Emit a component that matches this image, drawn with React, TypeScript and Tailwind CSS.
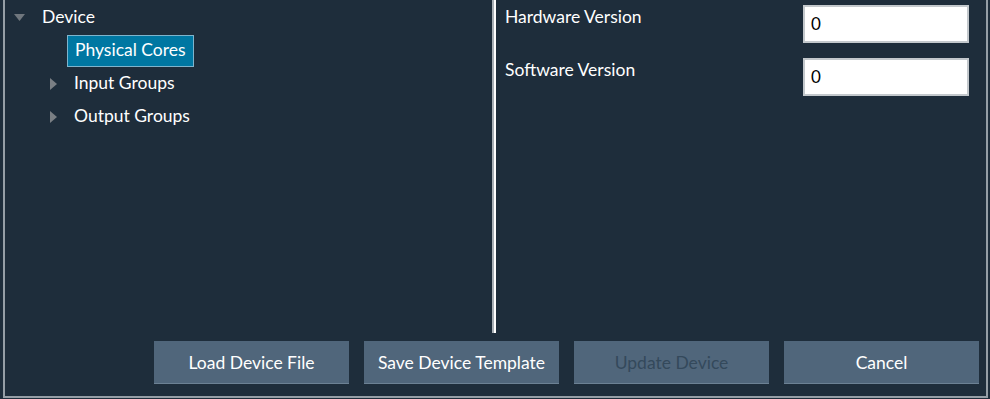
const font = { fontFamily: '"Lato", "Noto Sans", sans-serif' };

function TreeRow({
  indent,
  arrow,
  label,
  selected,
}: {
  indent: string;
  arrow?: 'down' | 'right';
  label: string;
  selected?: boolean;
}) {
  return (
    <div className={`flex h-[33px] items-center ${indent}`}>
      <div className={`${arrow === 'right' ? 'w-[24px]' : 'w-[28px]'} flex items-center justify-start`}>
        {arrow === 'down' && (
          <svg width="11" height="7" viewBox="0 0 11 7">
            <path d="M0 0 L11 0 L5.5 7 Z" fill="#6f767d" />
          </svg>
        )}
        {arrow === 'right' && (
          <svg width="7" height="12" viewBox="0 0 7 12">
            <path d="M0 0 L7 6 L0 12 Z" fill="#7a7f84" />
          </svg>
        )}
      </div>
      {selected ? (
        <span className="h-[32px] -ml-[8px] px-[7px] flex items-center bg-[#0077a2] border border-[#7fb4cc] text-white text-[17.5px]">
          {label}
        </span>
      ) : (
        <span className="text-white text-[17.5px]">{label}</span>
      )}
    </div>
  );
}

function Field({ label }: { label: string }) {
  return (
    <div className="flex items-center justify-between h-[37px]">
      <span className="text-white text-[17.5px] -mt-[12px]">{label}</span>
      <div className="w-[166px] h-[38px] bg-white border-2 border-[#c3c8cc] flex items-center pl-[6px] text-black text-[17px]">
        0
      </div>
    </div>
  );
}

function Btn({ label, disabled }: { label: string; disabled?: boolean }) {
  return (
    <button
      className={`w-[195px] h-[43px] pt-[3px] bg-[#50667b] border-b border-[#6c8194] text-[17.5px] ${
        disabled ? 'text-[#34495b]' : 'text-white'
      }`}
    >
      {label}
    </button>
  );
}

export default function App() {
  return (
    <div className="w-[990px] h-[399px] bg-[#1e2d3b] pl-[3px] pr-[2px] pb-[1px]" style={font}>
      <div className="h-full border-x-2 border-b-2 border-[#959ea6] flex flex-col">
        {/* Panels */}
        <div className="flex h-[333px]">
          {/* Tree */}
          <div className="w-[487px] pt-[1px] pl-[9px]">
            <TreeRow indent="" arrow="down" label="Device" />
            <TreeRow indent="pl-[33px]" label="Physical Cores" selected />
            <TreeRow indent="pl-[36px]" arrow="right" label="Input Groups" />
            <TreeRow indent="pl-[36px]" arrow="right" label="Output Groups" />
          </div>
          {/* Splitter */}
          <div className="w-[2px] bg-[#a9b0b6]" />
          <div className="w-[2px] bg-white" />
          {/* Properties */}
          <div className="flex-1 pl-[9px] pr-[17px] pt-[5px] flex flex-col gap-[16px]">
            <Field label="Hardware Version" />
            <Field label="Software Version" />
          </div>
        </div>
        {/* Buttons */}
        <div className="flex justify-end gap-[15px] pt-[8px] pr-[7px]">
          <Btn label="Load Device File" />
          <Btn label="Save Device Template" />
          <Btn label="Update Device" disabled />
          <Btn label="Cancel" />
        </div>
      </div>
    </div>
  );
}
